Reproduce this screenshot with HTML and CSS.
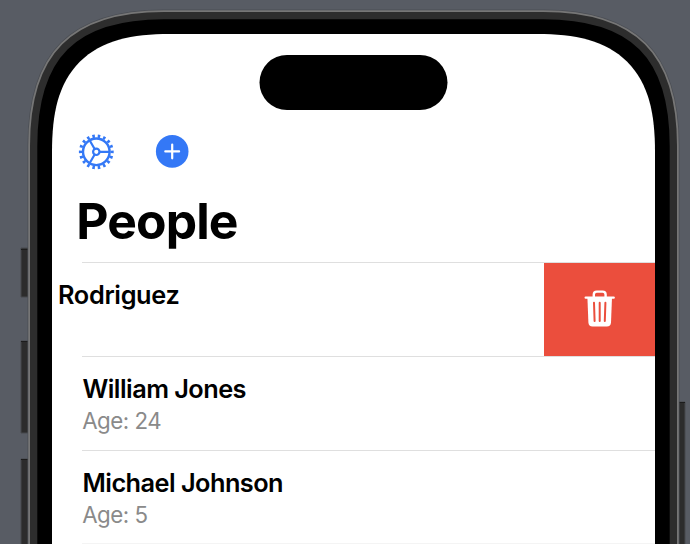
FILE: index.html
```
<!DOCTYPE html>
<html lang="en">
<head>
<meta charset="utf-8">
<title>People</title>
<link rel="stylesheet" href="styles.css">
</head>
<body>
<svg class="shell" width="690" height="544" viewBox="0 0 690 544" aria-hidden="true">
  <defs>
    <path id="outline" d="M52 146C52 114 57.4 80.4 77.9 59.9C98.4 39.4 132 34 164 34H543C575 34 608.6 39.4 629.1 59.9C649.6 80.4 655 114 655 146V620H52Z"/>
  </defs>
  <g class="button">
    <path d="M21 248h10v49H21zM21 341h10v92H21zM21 459h10v100H21zM675 402h10v160h-10z"/>
  </g>
  <g class="button-edge">
    <path d="M21 249.5h7M21 341.5h7M21 459.5h7M678 402.5h7"/>
  </g>
  <use href="#outline" class="halo"/>
  <use href="#outline" class="rim"/>
  <use href="#outline" class="band"/>
  <use href="#outline" class="bezel"/>
  <path class="display" d="M52 152C52 114 58 83.8 79.8 61.8C101.8 40 132 34 170 34H537C575 34 605.2 40 627.2 61.8C649 83.8 655 114 655 152V620H52Z"/>
</svg>
<main class="screen">
  <div class="island"></div>
  <nav class="toolbar">
    <svg class="gear" width="36" height="36" viewBox="-18 -18 36 36">
      <circle class="teeth" r="15.8" pathLength="180"/>
      <circle class="ring" r="13.3"/>
      <path class="spokes" d="M3.5 0H13M-1.8 -3L-6.7 -11.5M-1.8 3L-6.7 11.5"/>
      <circle class="hub" r="3.2"/>
    </svg>
    <svg class="plus" width="34" height="34" viewBox="-17 -17 34 34">
      <circle r="16.3"/>
      <path d="M-6.9 0H6.9M0-6.9V6.9"/>
    </svg>
  </nav>
  <h1>People</h1>
  <ul class="list">
    <li class="swiped">
      <div class="person"><div class="name">Rodriguez</div></div>
      <button class="delete" aria-label="Delete">
        <svg width="32" height="38" viewBox="0 0 32 38">
          <path class="lid" d="M1.7 7.6H29.7M9.8 7.1V4.4Q9.8 1.6 12.8 1.6H18.6Q21.6 1.6 21.6 4.4V7.1"/>
          <path class="can" d="M3.4 7.6H28L27 32.4Q26.8 36.4 22.8 36.4H8.6Q4.6 36.4 4.4 32.4Z"/>
          <path class="slots" d="M10 12.8L10.6 31M15.7 12.8V31M21.4 12.8L20.8 31"/>
        </svg>
      </button>
    </li>
    <li><div class="name">William Jones</div><div class="age">Age: 24</div></li>
    <li class="last"><div class="name">Michael Johnson</div><div class="age">Age: 5</div></li>
    <li class="next"></li>
  </ul>
</main>
</body>
</html>
```
FILE: styles.css
```
* { box-sizing: border-box; }
body {
  margin: 0;
  height: 544px;
  overflow: hidden;
  background: #585c64;
  font-family: Inter, "Liberation Sans", sans-serif;
  color: #000;
}
.shell { position: absolute; inset: 0; }
.shell use { fill: #000; }
.shell .display { fill: #fff; }
.halo { stroke: #4b4e54; stroke-width: 49; }
.rim { stroke: #767676; stroke-width: 47.5; }
.band { stroke: #2d2d2d; stroke-width: 44; }
.bezel { stroke: #000; stroke-width: 29.4; }
.button { fill: #2c2c2c; stroke: #46484c; stroke-width: 1; }
.button-edge { stroke: #1c1c1c; stroke-width: 1; }
.screen {
  position: relative;
  width: 603px;
  height: 544px;
  margin-left: 52px;
  padding-top: 55px;
  overflow: hidden;
}
.island {
  width: 188px;
  height: 55px;
  margin-left: 207px;
  border-radius: 28px;
  background: #000;
  transform: translateX(0.5px);
}
.toolbar {
  display: flex;
  align-items: center;
  gap: 41px;
  height: 36px;
  margin: 24px 0 0 26px;
}
.toolbar svg { overflow: visible; }
.gear { fill: none; stroke: #3478f6; }
.gear > * { transform: translate(0.3px, -0.2px); }
.teeth { stroke-width: 3.2; stroke-dasharray: 4.6 5.4; stroke-dashoffset: 2.3; }
.ring { stroke-width: 2.4; }
.spokes, .hub { stroke-width: 2.2; }
.plus { fill: #3478f6; }
.plus > * { transform: translate(0.2px, -0.6px); }
.plus path { stroke: #fff; stroke-width: 2.2; stroke-linecap: round; }
h1 {
  height: 92px;
  margin: 0;
  padding-left: 24.3px;
  font-size: 49.8px;
  line-height: 102px;
  letter-spacing: -0.9px;
  font-weight: 700;
}
.list { margin: 0; padding: 0; list-style: none; }
.list li {
  height: 94px;
  margin-left: 30px;
  padding-top: 16px;
  border-top: 1px solid #dfdfdf;
}
.list .swiped {
  display: flex;
  justify-content: space-between;
  padding-top: 0;
}
.list .last { height: 93px; }
.list .next { border-color: #f4f4f4; }
.person { margin-left: -24px; padding-top: 16px; }
.name {
  padding-left: 0.5px;
  font-size: 25.3px;
  line-height: 32px;
  letter-spacing: -0.53px;
  font-weight: 600;
  white-space: nowrap;
}
.person .name { padding-left: 0; letter-spacing: -0.33px; }
.age {
  padding-left: 0.2px;
  font-size: 22.3px;
  line-height: 32px;
  letter-spacing: -0.5px;
  color: #8a8a8a;
}
.delete {
  display: grid;
  place-items: center;
  width: 111px;
  height: 93px;
  padding: 0 0 2px;
  border: 0;
  background: #eb4e3d;
}
.delete svg { fill: none; }
.lid { stroke: #fff; stroke-width: 2.4; stroke-linecap: round; }
.can { fill: #fff; }
.slots { stroke: #eb4e3d; stroke-width: 2; stroke-linecap: round; }
```
